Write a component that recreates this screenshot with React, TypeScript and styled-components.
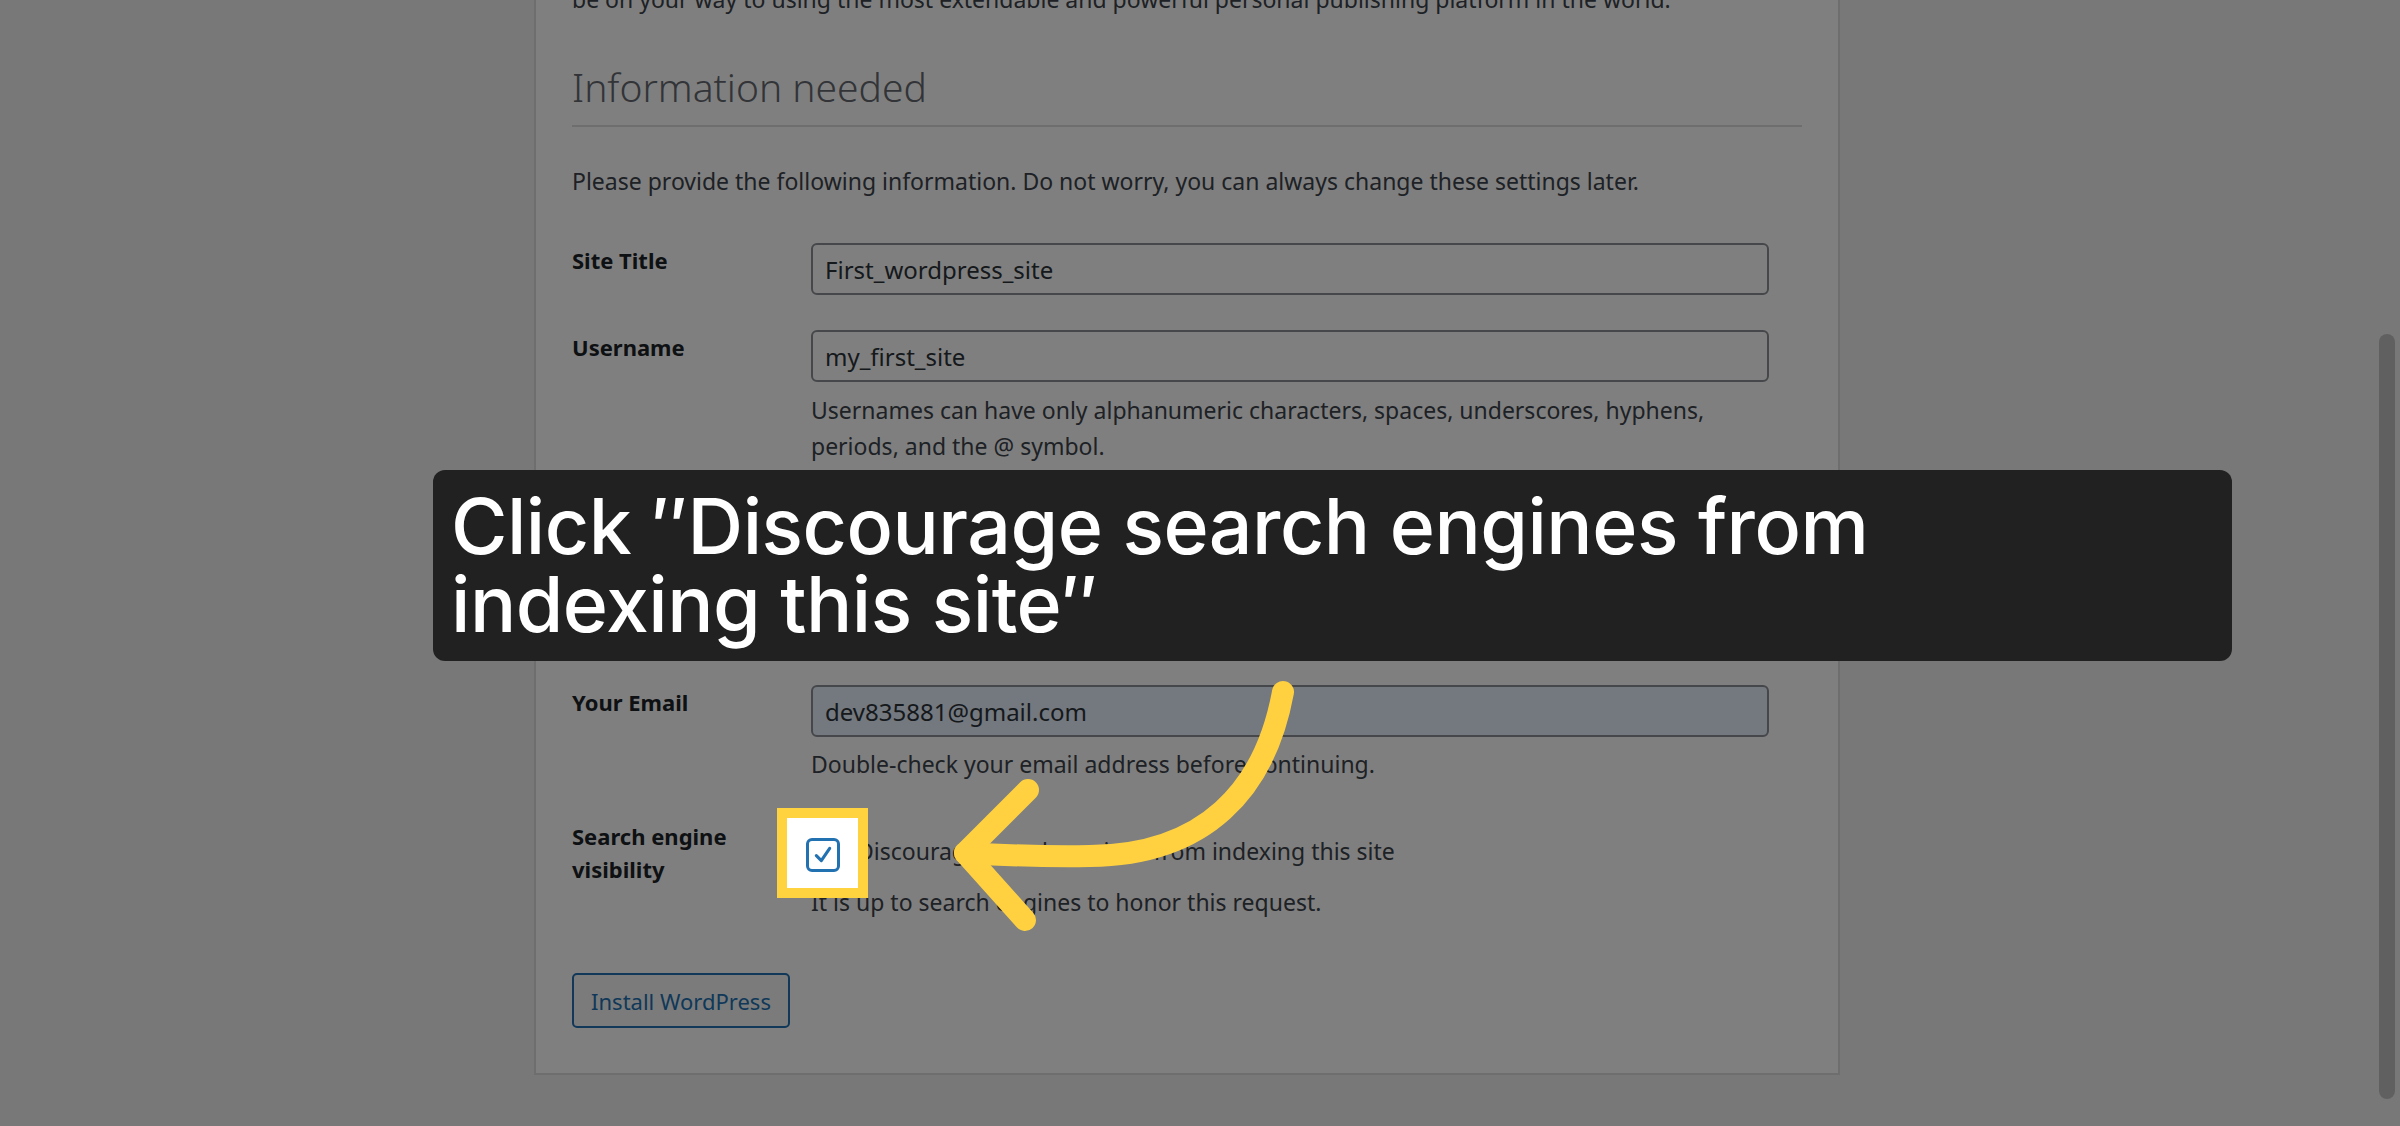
import styled, { createGlobalStyle } from 'styled-components';

const Global = createGlobalStyle`
  html, body { margin: 0; padding: 0; height: 1126px; overflow: hidden; }
  body { background: #f0f0f1; font-family: "Noto Sans", "Open Sans", sans-serif; color: #1d2327; }
`;

const Screen = styled.div`
  position: relative;
  display: flex;
  height: 1126px;
  overflow: hidden;
`;

const Main = styled.div`
  flex: 1;
  display: flex;
  justify-content: center;
`;

const Card = styled.div`
  width: 1230px;
  margin-top: -40px;
  align-self: flex-start;
  background: #fff;
  border: 2px solid #dcdcde;
  padding: 20px 36px 45px;
`;

const Text = styled.p<{ $top?: number }>`
  margin: ${p => p.$top ?? 0}px 0 0;
  font-size: 23px;
  line-height: 34px;
  color: #3c434a;
  white-space: nowrap;
`;

const Heading = styled.h2`
  margin: 46px 0 0;
  font-size: 39px;
  line-height: 50px;
  font-weight: 300;
  color: #646970;
  padding-bottom: 13px;
  border-bottom: 2px solid #dcdcde;
`;

const Row = styled.div<{ $top: number }>`
  display: grid;
  grid-template-columns: 239px 958px;
  margin-top: ${p => p.$top}px;
`;

const Label = styled.div<{ $lh?: number }>`
  font-size: 22px;
  font-weight: 700;
  line-height: ${p => p.$lh ?? 34}px;
  color: #1d2327;
`;

const Input = styled.div<{ $bg?: string }>`
  height: 48px;
  box-sizing: content-box;
  border: 2px solid #8c8f94;
  border-radius: 6px;
  background: ${p => p.$bg ?? '#fff'};
  padding: 0 12px;
  display: flex;
  align-items: center;
  font-size: 24px;
  color: #2c3338;
  flex: 1;
`;

const Help = styled.div<{ $top: number }>`
  margin-top: ${p => p.$top}px;
  font-size: 23px;
  line-height: 36px;
  color: #3c434a;
  white-space: nowrap;
`;

const PassLine = styled.div`
  display: flex;
  gap: 5px;
`;

const PassWrap = styled.div`
  width: 822px;
  display: flex;
  flex-direction: column;
`;

const Meter = styled.div`
  height: 43px;
  background: #f0c33c;
  border: 2px solid #dba617;
  box-sizing: border-box;
  display: flex;
  align-items: center;
  justify-content: center;
  font-size: 22px;
`;

const HideBtn = styled.div`
  width: 131px;
  height: 52px;
  box-sizing: border-box;
  border: 2px solid #2271b1;
  border-radius: 5px;
  color: #2271b1;
  font-size: 22px;
  display: flex;
  align-items: center;
  justify-content: center;
`;

const CheckLine = styled.div`
  display: flex;
  align-items: center;
  gap: 12px;
  padding-top: 14px;
  font-size: 23px;
  color: #3c434a;
`;

const Box = styled.span<{ $size?: number }>`
  width: ${p => p.$size ?? 24}px;
  height: ${p => p.$size ?? 24}px;
  border: 3px solid #2271b1;
  border-radius: 6px;
  background: #fff;
  display: inline-flex;
  align-items: center;
  justify-content: center;
  color: #2271b1;
`;

const Button = styled.div`
  margin-top: 53px;
  width: 218px;
  height: 55px;
  box-sizing: border-box;
  border: 2px solid #2271b1;
  border-radius: 5px;
  color: #2271b1;
  font-size: 22px;
  display: flex;
  align-items: center;
  justify-content: center;
  background: #f6f7f7;
`;

const Scroll = styled.div`
  width: 26px;
  background: #f1f1f1;
  display: flex;
  flex-direction: column;
  padding: 334px 5px 27px;
  box-sizing: border-box;
`;

const Thumb = styled.div`
  flex: 1;
  background: #c1c1c1;
  border-radius: 8px;
`;

const Dim = styled.div`
  position: absolute;
  inset: 0;
  background: rgba(0, 0, 0, 0.5);
`;

const Spot = styled.div`
  position: absolute;
  left: 777px;
  top: 808px;
  width: 91px;
  height: 90px;
  box-sizing: border-box;
  border: 10px solid #ffd23f;
  background: #fff;
  display: flex;
  align-items: center;
  justify-content: center;
  padding-top: 3px;
`;

const Tip = styled.div`
  position: absolute;
  left: 433px;
  top: 470px;
  width: 1799px;
  height: 191px;
  box-sizing: border-box;
  padding: 17px 18px;
  background: #212121;
  border-radius: 12px;
  color: #fff;
  font-family: Inter, "Noto Sans", sans-serif;
  font-weight: 500;
  font-size: 77px;
  line-height: 78px;
  letter-spacing: -0.5px;
  white-space: nowrap;
`;

const Arrow = styled.svg`
  position: absolute;
  left: 0;
  top: 0;
`;

const Check = ({ size = 18 }: { size?: number }) => (
  <svg width={size} height={size} viewBox="0 0 18 18">
    <path d="M3 9.5 L7.5 14 L15 3" fill="none" stroke="currentColor" strokeWidth="2.8" strokeLinecap="round" strokeLinejoin="round" />
  </svg>
);

export default function App() {
  return (
    <Screen>
      <Global />
      <Main>
        <Card>
          <Text>be on your way to using the most extendable and powerful personal publishing platform in the world.</Text>
          <Heading>Information needed</Heading>
          <Text $top={37}>Please provide the following information. Do not worry, you can always change these settings later.</Text>
          <Row $top={45}>
            <Label>Site Title</Label>
            <Input>First_wordpress_site</Input>
          </Row>
          <Row $top={35}>
            <Label>Username</Label>
            <div>
              <Input>my_first_site</Input>
              <Help $top={10}>Usernames can have only alphanumeric characters, spaces, underscores, hyphens,<br />periods, and the @ symbol.</Help>
            </div>
          </Row>
          <Row $top={39}>
            <Label>Password</Label>
            <div>
              <PassLine>
                <PassWrap>
                  <Input>F2r0s!kq9Lm@Zx7</Input>
                  <Meter>Medium</Meter>
                </PassWrap>
                <HideBtn>Hide</HideBtn>
              </PassLine>
              <Help $top={17}><b>Important:</b> You will need this password to log in. Please store it in a secure location.</Help>
            </div>
          </Row>
          <Row $top={49}>
            <Label>Your Email</Label>
            <div>
              <Input $bg="#e8f0fe">dev835881@gmail.com</Input>
              <Help $top={9}>Double-check your email address before continuing.</Help>
            </div>
          </Row>
          <Row $top={38}>
            <Label $lh={33}>Search engine<br />visibility</Label>
            <div>
              <CheckLine>
                <Box $size={28}><Check size={20} /></Box>
                Discourage search engines from indexing this site
              </CheckLine>
              <Help $top={16}>It is up to search engines to honor this request.</Help>
            </div>
          </Row>
          <Button>Install WordPress</Button>
        </Card>
      </Main>
      <Scroll>
        <Thumb />
      </Scroll>
      <Dim />
      <Spot>
        <Box $size={28}><Check size={20} /></Box>
      </Spot>
      <Tip>Click ″Discourage search engines from<br />indexing this site″</Tip>
      <Arrow width="2400" height="1126" viewBox="0 0 2400 1126">
        <g fill="none" stroke="#ffd140" strokeWidth="22" strokeLinecap="round" strokeLinejoin="round">
          <path d="M1283 692 C1265 790 1205 855 1090 856 C1040 857 1000 855 965 853" />
          <path d="M1028 790 L965 853 L1025 920" />
        </g>
      </Arrow>
    </Screen>
  );
}
